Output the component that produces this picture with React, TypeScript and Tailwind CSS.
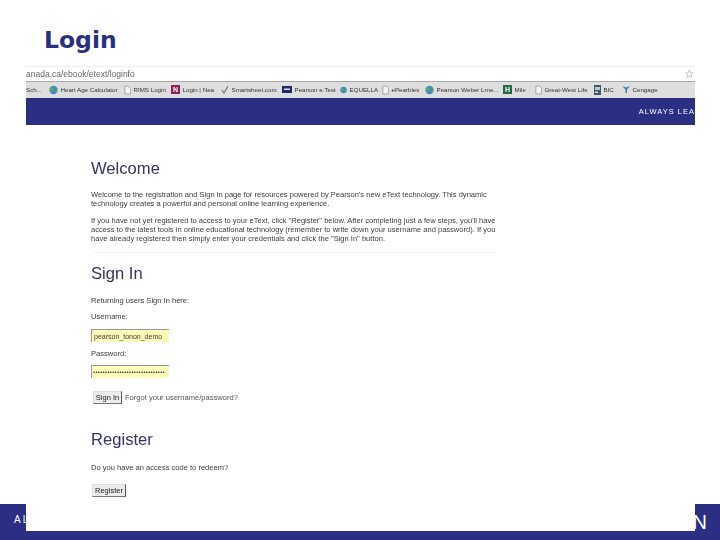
import React from 'react';

const DocIcon = () => (
  <svg width="7" height="10" viewBox="0 0 8 10" className="shrink-0">
    <path d="M1 .5h4l2.500 2.500v6.500H1z" fill="#f4f4f4" stroke="#8a8a8a" strokeWidth="0.8" />
  </svg>
);

const Globe = ({ size = 9 }: { size?: number }) => (
  <svg width={size} height={size + 1} viewBox="0 0 9 10" className="shrink-0">
    <circle cx="4.500" cy="5" r="4.200" fill="#3f8fc4" />
    <path d="M2 2.500c2-1 3 .5 2 2s-2 1-1.500 3L1 6.500zM6 6l2-1-.8 3z" fill="#7aa83c" />
  </svg>
);

const Square = ({ letter, className }: { letter: string; className: string }) => (
  <span className={`flex h-[9px] w-[9px] shrink-0 items-center justify-center text-[7px] font-bold leading-none text-white ${className}`}>
    {letter}
  </span>
);

const Check = () => (
  <svg width="8" height="9" viewBox="0 0 8 9" className="shrink-0">
    <path d="M1 5l2 3 4-7" fill="none" stroke="#5b7f98" strokeWidth="1.200" />
  </svg>
);

const FlagIcon = () => (
  <svg width="10" height="7" viewBox="0 0 10 7" className="shrink-0">
    <rect width="10" height="7" fill="#1c2a66" />
    <rect x="2" y="2.500" width="6" height="1.500" fill="#d8dcec" />
  </svg>
);

const Bird = () => (
  <svg width="8" height="9" viewBox="0 0 8 9" className="shrink-0">
    <path d="M0 1l4 1.500L8 1 5 4.500V8H3.500V4.500z" fill="#2b86a8" />
  </svg>
);

const Book = () => (
  <svg width="7" height="10" viewBox="0 0 7 10" className="shrink-0">
    <rect width="7" height="10" fill="#3a5a6a" />
    <rect x="1" y="2" width="5" height="3" fill="#b8cbd4" />
    <rect x="1" y="6.500" width="3" height="1.500" fill="#d8e2e6" />
  </svg>
);

const bookmarks: { icon: React.ReactNode; label: string; width: string }[] = [
  { icon: <Globe />, label: 'Heart Age Calculator', width: 'w-[75px]' },
  { icon: <DocIcon />, label: 'RIMS Login', width: 'w-[47px]' },
  { icon: <Square letter="N" className="bg-[#8e2257]" />, label: 'Login | Nea', width: 'w-[50px]' },
  { icon: <Check />, label: 'Smartsheet.com', width: 'w-[61px]' },
  { icon: <FlagIcon />, label: 'Pearson e.Test', width: 'w-[58px]' },
  { icon: <Globe size={7} />, label: 'EQUELLA', width: 'w-[42px]' },
  { icon: <DocIcon />, label: 'ePearbles', width: 'w-[43px]' },
  { icon: <Globe />, label: 'Pearson Weber Lrne...', width: 'w-[78px]' },
  { icon: <Square letter="H" className="bg-[#1e6b45]" />, label: 'Mile', width: 'w-[32px]' },
  { icon: <DocIcon />, label: 'Great-West Life', width: 'w-[59px]' },
  { icon: <Book />, label: 'BIC', width: 'w-[28px]' },
  { icon: <Bird />, label: 'Cengage', width: 'w-[40px]' },
];

const Heading = ({ children, className }: { children: React.ReactNode; className?: string }) => (
  <h2 className={`text-[16.600px] leading-[20px] text-[#33345f] ${className ?? ''}`}>{children}</h2>
);

const GrayButton = ({ children, className }: { children: React.ReactNode; className?: string }) => (
  <button className={`h-[13px] border border-r-[#555] border-b-[#777] border-t-[#ddd] border-l-[#ddd] bg-[#ececec] text-[7.500px] leading-none text-[#222] ${className ?? ''}`}>
    {children}
  </button>
);

export default function App() {
  return (
    <div className="relative h-[540px] w-[720px] overflow-hidden bg-white font-['Liberation_Sans',Arial,sans-serif]">
      {/* slide footer, mostly hidden under the pasted screenshot */}
      <div className="absolute bottom-0 left-0 flex h-[36px] w-full items-start justify-between bg-[#2a2f83] pt-[9px] text-white">
        <span className="pl-[14px] text-[10px] leading-[14px] tracking-[2px]">AL</span>
        <span className="pr-[13px] text-[20px] leading-[18px]">N</span>
      </div>

      <h1 className="pl-[44px] pt-[26px] font-['DejaVu_Sans',sans-serif] text-[23.500px] font-bold leading-[29px] text-[#2a2f7f]">
        Login
      </h1>

      <div className="relative ml-[26px] mt-[11px] h-[465px] w-[669px] overflow-hidden bg-white blur-[0.4px]">
        <div className="flex h-[15px] items-center justify-between border-t border-[#f0f0f0] text-[8.500px] text-[#666]">
          <span>anada.ca/ebook/etext/loginfo</span>
          <span className="text-[12px] leading-none text-[#888]">☆</span>
        </div>
        <div className="flex h-[17px] items-center whitespace-nowrap border-t border-[#a9a9a9] bg-[#dedede] text-[6.200px] text-[#333]">
          <span className="w-[23px]">Sch...</span>
          {bookmarks.map((b) => (
            <span key={b.label} className={`flex shrink-0 items-center gap-[2.500px] ${b.width}`}>
              {b.icon}
              <span>{b.label}</span>
            </span>
          ))}
        </div>
        <div className="flex h-[27px] items-center justify-end whitespace-nowrap bg-[#2a2f83] text-[7.500px] tracking-[1px] text-white">
          ALWAYS LEA
        </div>

        <div className="pl-[65px] text-[7.550px] leading-[9px] text-[#3c3c3c]">
          <Heading className="mt-[34px]">Welcome</Heading>
          <p className="mt-[11px] w-[410px]">
            Welcome to the registration and Sign in page for resources powered by Pearson's new eText technology. This dynamic technology creates a powerful and personal online learning experience.
          </p>
          <p className="mt-[8px] w-[410px]">
            If you have not yet registered to access to your eText, click "Register" below. After completing just a few steps, you'll have access to the latest tools in online educational technology (remember to write down your username and password). If you have already registered then simply enter your credentials and click the "Sign In" button.
          </p>
          <div className="mt-[9px] h-px w-[405px] bg-[#f4f4f4]" />

          <Heading className="mt-[11px]">Sign In</Heading>
          <p className="mt-[12px]">Returning users Sign In here:</p>
          <p className="mt-[7px]">Username:</p>
          <div className="mt-[8px] flex h-[13px] w-[78px] items-center border-l border-t border-[#999] bg-[#fcfcba] pl-[2px] text-[7px]">
            pearson_tonon_demo
          </div>
          <p className="mt-[7px]">Password:</p>
          <div className="mt-[7px] flex h-[13px] w-[78px] items-center overflow-hidden border-l border-t border-[#999] bg-[#fcfcba] pl-[1px] text-[6px] tracking-[0.300px]">
            ••••••••••••••••••••••••••••••
          </div>
          <div className="ml-[2px] mt-[13px] flex items-center gap-[3px]">
            <GrayButton className="w-[29px]">Sign In</GrayButton>
            <span className="text-[#555]">Forgot your username/password?</span>
          </div>

          <Heading className="mt-[26px]">Register</Heading>
          <p className="mt-[13px]">Do you have an access code to redeem?</p>
          <GrayButton className="ml-[1px] mt-[12px] w-[34px]">Register</GrayButton>
        </div>
      </div>
    </div>
  );
}
